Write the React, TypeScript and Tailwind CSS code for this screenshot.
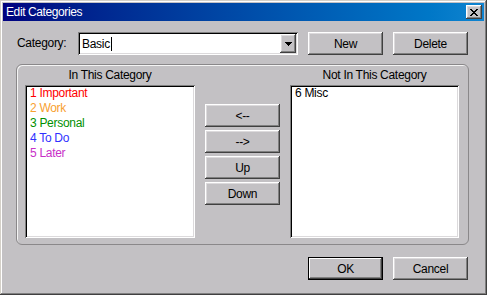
import React from 'react';

const raised =
  'bg-[#c3c1c4] shadow-[inset_-1px_-1px_#404040,inset_1px_1px_#fff,inset_-2px_-2px_#808080,inset_2px_2px_#dcdadc]';
const sunken =
  'bg-white shadow-[inset_1px_1px_#808080,inset_-1px_-1px_#fff,inset_2px_2px_#000,inset_-2px_-2px_#dcdadc]';

const Button: React.FC<{ label: string; isDefault?: boolean; className?: string }> = ({
  label,
  isDefault,
  className = '',
}) => (
  <button
    className={`${
      isDefault
        ? 'bg-[#c3c1c4] shadow-[inset_0_0_0_1px_#000,inset_-2px_-2px_#404040,inset_2px_2px_#fff,inset_-3px_-3px_#808080]'
        : raised
    } w-[75px] h-[23px] flex items-center justify-center text-black ${className}`}
  >
    {label}
  </button>
);

const CloseGlyph = () => (
  <svg width="8" height="7" viewBox="0 0 8 7" shapeRendering="crispEdges">
    <rect x="0" y="0" width="2" height="1" />
    <rect x="6" y="0" width="2" height="1" />
    <rect x="1" y="1" width="2" height="1" />
    <rect x="5" y="1" width="2" height="1" />
    <rect x="2" y="2" width="4" height="1" />
    <rect x="3" y="3" width="2" height="1" />
    <rect x="2" y="4" width="4" height="1" />
    <rect x="1" y="5" width="2" height="1" />
    <rect x="5" y="5" width="2" height="1" />
    <rect x="0" y="6" width="2" height="1" />
    <rect x="6" y="6" width="2" height="1" />
  </svg>
);

const DownArrow = () => (
  <svg width="7" height="4" viewBox="0 0 7 4" shapeRendering="crispEdges">
    <rect x="0" y="0" width="7" height="1" />
    <rect x="1" y="1" width="5" height="1" />
    <rect x="2" y="2" width="3" height="1" />
    <rect x="3" y="3" width="1" height="1" />
  </svg>
);

const items = [
  { text: '1 Important', color: 'text-[#ff0000]' },
  { text: '2 Work', color: 'text-[#f8a030]' },
  { text: '3 Personal', color: 'text-[#009000]' },
  { text: '4 To Do', color: 'text-[#3030ff]' },
  { text: '5 Later', color: 'text-[#c830c8]' },
];

export default function App() {
  return (
    <div className="w-[487px] h-[295px] bg-[#c3c1c4] p-[3px] flex flex-col font-['Liberation_Sans',Arial,sans-serif] text-[12px] tracking-[-0.3px] text-black shadow-[inset_-1px_-1px_#404040,inset_1px_1px_#d4d0c8,inset_-2px_-2px_#808080,inset_2px_2px_#fff]">
      {/* title bar */}
      <div className="h-[18px] flex items-center justify-between pl-[3px] pr-[2px] bg-linear-to-r from-[#000080] to-[#1084d0]">
        <span className="text-white text-[12px] tracking-[-0.4px]">Edit Categories</span>
        <div className={`${raised} w-[16px] h-[14px] flex items-center justify-center`}>
          <CloseGlyph />
        </div>
      </div>

      {/* category row */}
      <div className="mt-[11px] pl-[14px] flex items-start">
        <span className="w-[61px] h-[23px] leading-[23px]">Category:</span>
        <div className={`${sunken} w-[220px] h-[23px] flex items-center pl-[4px] pr-[2px] py-[2px]`}>
          <span className="flex-1 flex items-center">
            Basic
            <span className="w-px h-[14px] bg-black ml-[1px]" />
          </span>
          <div className={`${raised} w-[16px] h-full flex items-center justify-center`}>
            <DownArrow />
          </div>
        </div>
        <Button label="New" className="ml-[10px] h-[22px]" />
        <Button label="Delete" className="ml-[10px] h-[22px]" />
      </div>

      {/* group box */}
      <div className="mt-[9px] ml-[13px] w-[453px] h-[181px] rounded-[6px] border border-[#8a888a] shadow-[inset_1px_1px_#f4f4f4] pl-[8px] pr-[9px] pt-[3px] flex gap-[10px]">
        <div className="w-[170px] flex flex-col">
          <div className="h-[14px] leading-[14px] mb-[3px] text-center">In This Category</div>
          <div className={`${sunken} h-[153px] pl-[5px] pt-[1px]`}>
            {items.map((it) => (
              <div key={it.text} className={`leading-[15px] ${it.color}`}>
                {it.text}
              </div>
            ))}
          </div>
        </div>
        <div className="w-[75px] pt-[36px] flex flex-col gap-[3px]">
          <Button label="<--" />
          <Button label="-->" />
          <Button label="Up" />
          <Button label="Down" />
        </div>
        <div className="w-[169px] flex flex-col">
          <div className="h-[14px] leading-[14px] mb-[3px] text-center">Not In This Category</div>
          <div className={`${sunken} h-[153px] pl-[5px] pt-[1px]`}>
            <div className="leading-[15px]">6 Misc</div>
          </div>
        </div>
      </div>

      {/* bottom buttons */}
      <div className="mt-[12px] pl-[305px] flex gap-[10px]">
        <Button label="OK" isDefault />
        <Button label="Cancel" />
      </div>
    </div>
  );
}
